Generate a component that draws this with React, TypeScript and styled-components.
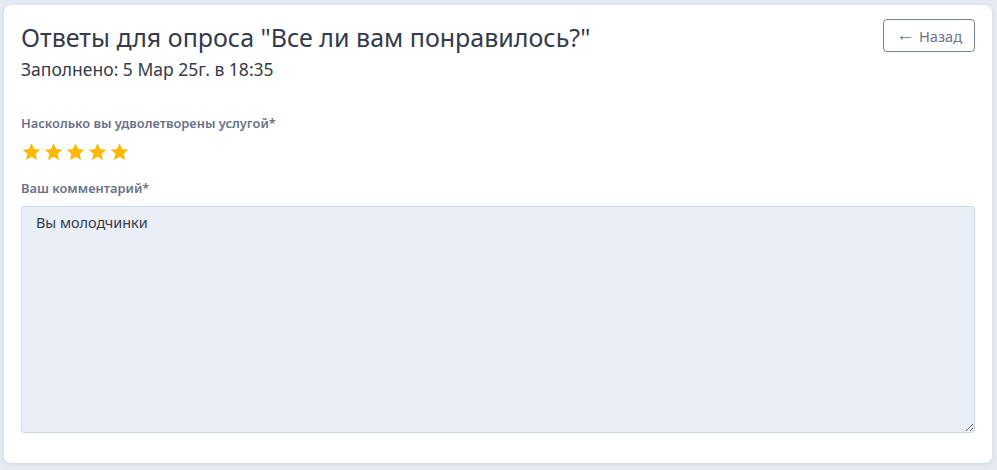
import React from "react";
import styled, { createGlobalStyle } from "styled-components";

const Global = createGlobalStyle`
  html, body { margin: 0; padding: 0; }
  body {
    background: #e6eaf2;
    font-family: "Noto Sans", "Open Sans", sans-serif;
  }
`;

const Page = styled.div`
  padding: 5px 5px 7px 4px;
  height: 470px;
  box-sizing: border-box;
  display: flex;
`;

const Card = styled.div`
  flex: 1;
  background: #fff;
  border-radius: 7px;
  box-shadow: 0 1px 4px rgba(40, 60, 100, 0.12);
  padding: 15px 17px 30px 17px;
  display: flex;
  flex-direction: column;
`;

const Header = styled.div`
  display: flex;
  justify-content: space-between;
  align-items: flex-start;
`;

const Titles = styled.div`
  display: flex;
  flex-direction: column;
`;

const Title = styled.h1`
  margin: 0;
  font-size: 25px;
  line-height: 34px;
  font-weight: 400;
  color: #333b4c;
`;

const Subtitle = styled.div`
  font-size: 17.5px;
  line-height: 22px;
  font-weight: 400;
  color: #333b4c;
  margin-top: 4px;
`;

const BackButton = styled.button`
  margin-top: -1px;
  height: 33px;
  width: 92px;
  border: 1px solid #7a8294;
  border-radius: 4px;
  background: #fff;
  color: #6c7487;
  font-family: inherit;
  font-size: 14.6px;
  display: flex;
  align-items: center;
  justify-content: center;
  gap: 4px;
  padding: 0;
`;

const Arrow = styled.span`
  font-size: 19px;
  line-height: 1;
  margin-top: -2px;
`;

const Field = styled.div<{ $grow?: boolean }>`
  display: flex;
  flex-direction: column;
  margin-top: ${(p) => (p.$grow ? "17px" : "34px")};
  ${(p) => (p.$grow ? "flex: 1;" : "")}
`;

const Label = styled.div`
  font-size: 12.85px;
  line-height: 18px;
  font-weight: 600;
  color: #697287;
`;

const Stars = styled.div`
  display: flex;
  gap: 1px;
  margin-top: 10px;
`;

const TextArea = styled.textarea`
  flex: 1;
  margin-top: 9px;
  background: #e9eef7;
  border: 1px solid #cfd8e8;
  border-radius: 3px;
  padding: 6px 14px;
  font-family: inherit;
  font-size: 14.4px;
  line-height: 20px;
  color: #333b4c;
  resize: vertical;
  outline: none;
`;

const Star = () => (
  <svg width="21" height="20" viewBox="0 0 24 24">
    <path
      fill="#ffb800"
      d="M12 1.6l3.1 6.9 7.5.7-5.7 5 1.7 7.4L12 17.8l-6.6 3.8 1.7-7.4-5.7-5 7.5-.7z"
    />
  </svg>
);

export default function App() {
  return (
    <>
      <Global />
      <Page>
        <Card>
          <Header>
            <Titles>
              <Title>Ответы для опроса "Все ли вам понравилось?"</Title>
              <Subtitle>Заполнено: 5 Мар 25г. в 18:35</Subtitle>
            </Titles>
            <BackButton>
              <Arrow>←</Arrow>
              <span>Назад</span>
            </BackButton>
          </Header>
          <Field>
            <Label>Насколько вы удволетворены услугой*</Label>
            <Stars>
              {[0, 1, 2, 3, 4].map((i) => (
                <Star key={i} />
              ))}
            </Stars>
          </Field>
          <Field $grow>
            <Label>Ваш комментарий*</Label>
            <TextArea readOnly defaultValue="Вы молодчинки" />
          </Field>
        </Card>
      </Page>
    </>
  );
}
